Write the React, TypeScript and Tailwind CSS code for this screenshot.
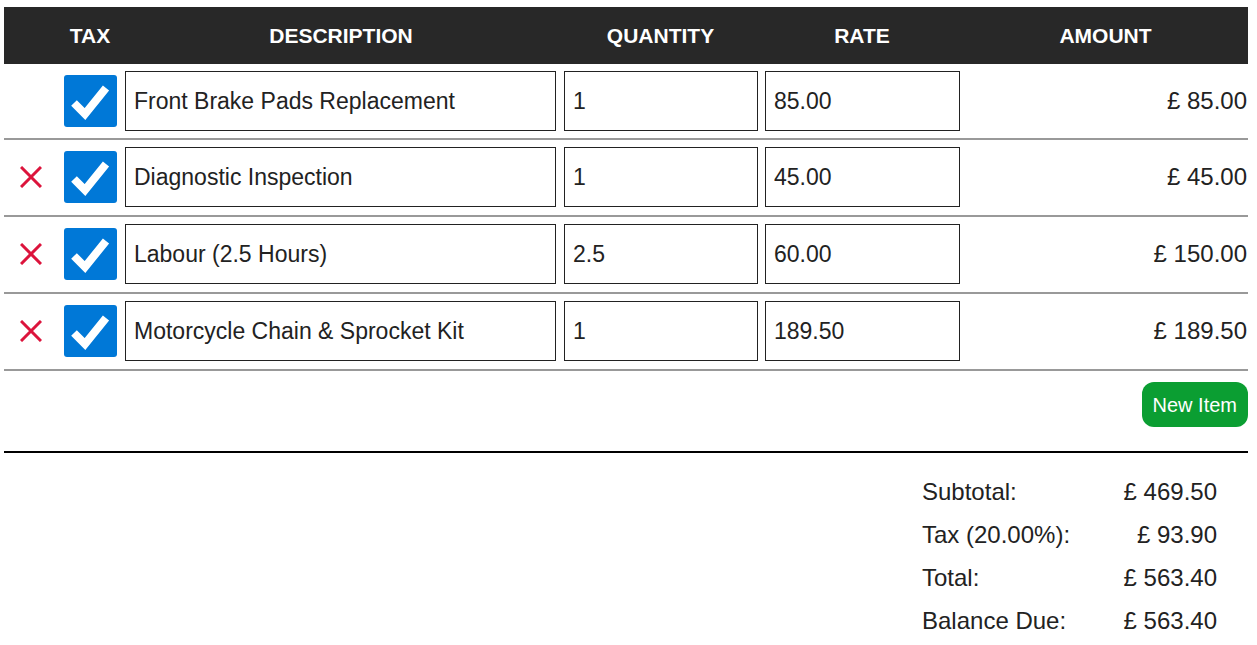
import React from "react";

interface LineItem {
  description: string;
  quantity: string;
  rate: string;
  amount: string;
  removable: boolean;
}

const items: LineItem[] = [
  { description: "Front Brake Pads Replacement", quantity: "1", rate: "85.00", amount: "£ 85.00", removable: false },
  { description: "Diagnostic Inspection", quantity: "1", rate: "45.00", amount: "£ 45.00", removable: true },
  { description: "Labour (2.5 Hours)", quantity: "2.5", rate: "60.00", amount: "£ 150.00", removable: true },
  { description: "Motorcycle Chain & Sprocket Kit", quantity: "1", rate: "189.50", amount: "£ 189.50", removable: true },
];

const totals = [
  { label: "Subtotal:", value: "£ 469.50" },
  { label: "Tax (20.00%):", value: "£ 93.90" },
  { label: "Total:", value: "£ 563.40" },
  { label: "Balance Due:", value: "£ 563.40" },
];

function RemoveIcon() {
  return (
    <svg width="22" height="22" viewBox="0 0 22 22" className="block">
      <path d="M1 1 L21 21 M21 1 L1 21" stroke="#dc143c" strokeWidth="3" fill="none" />
    </svg>
  );
}

function TaxCheckbox() {
  return (
    <div className="w-[53px] h-[52px] rounded-[3px] bg-[#0078d7] flex items-center justify-center">
      <svg width="53" height="52" viewBox="0 0 53 52">
        <polyline
          points="10,28 21,39 42,13"
          stroke="#ffffff"
          strokeWidth="8"
          fill="none"
          strokeLinejoin="miter"
          strokeLinecap="butt"
        />
      </svg>
    </div>
  );
}

const inputClass =
  "w-full h-[60px] border border-[#222] bg-white px-[8px] text-[23px] text-[#222] outline-none";

export default function App() {
  return (
    <div className="w-[1244px] ml-[4px] pt-[7px] font-['Liberation_Sans',Arial,sans-serif] text-[#222]">
      <table className="w-full table-fixed border-collapse">
        <colgroup>
          <col className="w-[54px]" />
          <col className="w-[64px]" />
          <col className="w-[438px]" />
          <col className="w-[201px]" />
          <col className="w-[202px]" />
          <col />
        </colgroup>
        <thead>
          <tr className="bg-[#282828] h-[57px]">
            <th></th>
            <th className="text-center text-[21px] font-bold text-white">TAX</th>
            <th className="text-center text-[21px] font-bold text-white">DESCRIPTION</th>
            <th className="text-center text-[21px] font-bold text-white">QUANTITY</th>
            <th className="text-center text-[21px] font-bold text-white">RATE</th>
            <th className="text-center text-[21px] font-bold text-white">AMOUNT</th>
          </tr>
        </thead>
        <tbody>
          {items.map((item, index) => {
            const cell = index === 0 ? "pt-[7px] pb-[7px]" : "pt-[7px] pb-[8px]";
            return (
              <tr key={index} className="border-b-2 border-[#999]">
                <td className={cell}>
                  {item.removable && (
                    <div className="flex justify-center">
                      <RemoveIcon />
                    </div>
                  )}
                </td>
                <td className={cell}>
                  <div className="flex justify-center">
                    <TaxCheckbox />
                  </div>
                </td>
                <td className={`${cell} pl-[3px] pr-[4px]`}>
                  <input className={inputClass} defaultValue={item.description} />
                </td>
                <td className={`${cell} pl-[4px] pr-[3px]`}>
                  <input className={inputClass} defaultValue={item.quantity} />
                </td>
                <td className={`${cell} pl-[4px] pr-[3px]`}>
                  <input className={inputClass} defaultValue={item.rate} />
                </td>
                <td className={`${cell} text-right text-[24px] pr-[1px]`}>{item.amount}</td>
              </tr>
            );
          })}
        </tbody>
      </table>

      <div className="flex justify-end pt-[11px] pb-[24px]">
        <button className="h-[45px] px-[11px] rounded-[12px] bg-[#0b9e32] text-white text-[20px]">
          New Item
        </button>
      </div>

      <div className="border-t-2 border-black"></div>

      <div className="flex justify-end pr-[31px] pt-[17px]">
        <div className="grid grid-cols-[1fr_auto] w-[295px]">
          {totals.map((row) => (
            <React.Fragment key={row.label}>
              <div className="h-[43px] flex items-center text-[24px]">{row.label}</div>
              <div className="h-[43px] flex items-center justify-end text-[24px]">{row.value}</div>
            </React.Fragment>
          ))}
        </div>
      </div>
    </div>
  );
}
